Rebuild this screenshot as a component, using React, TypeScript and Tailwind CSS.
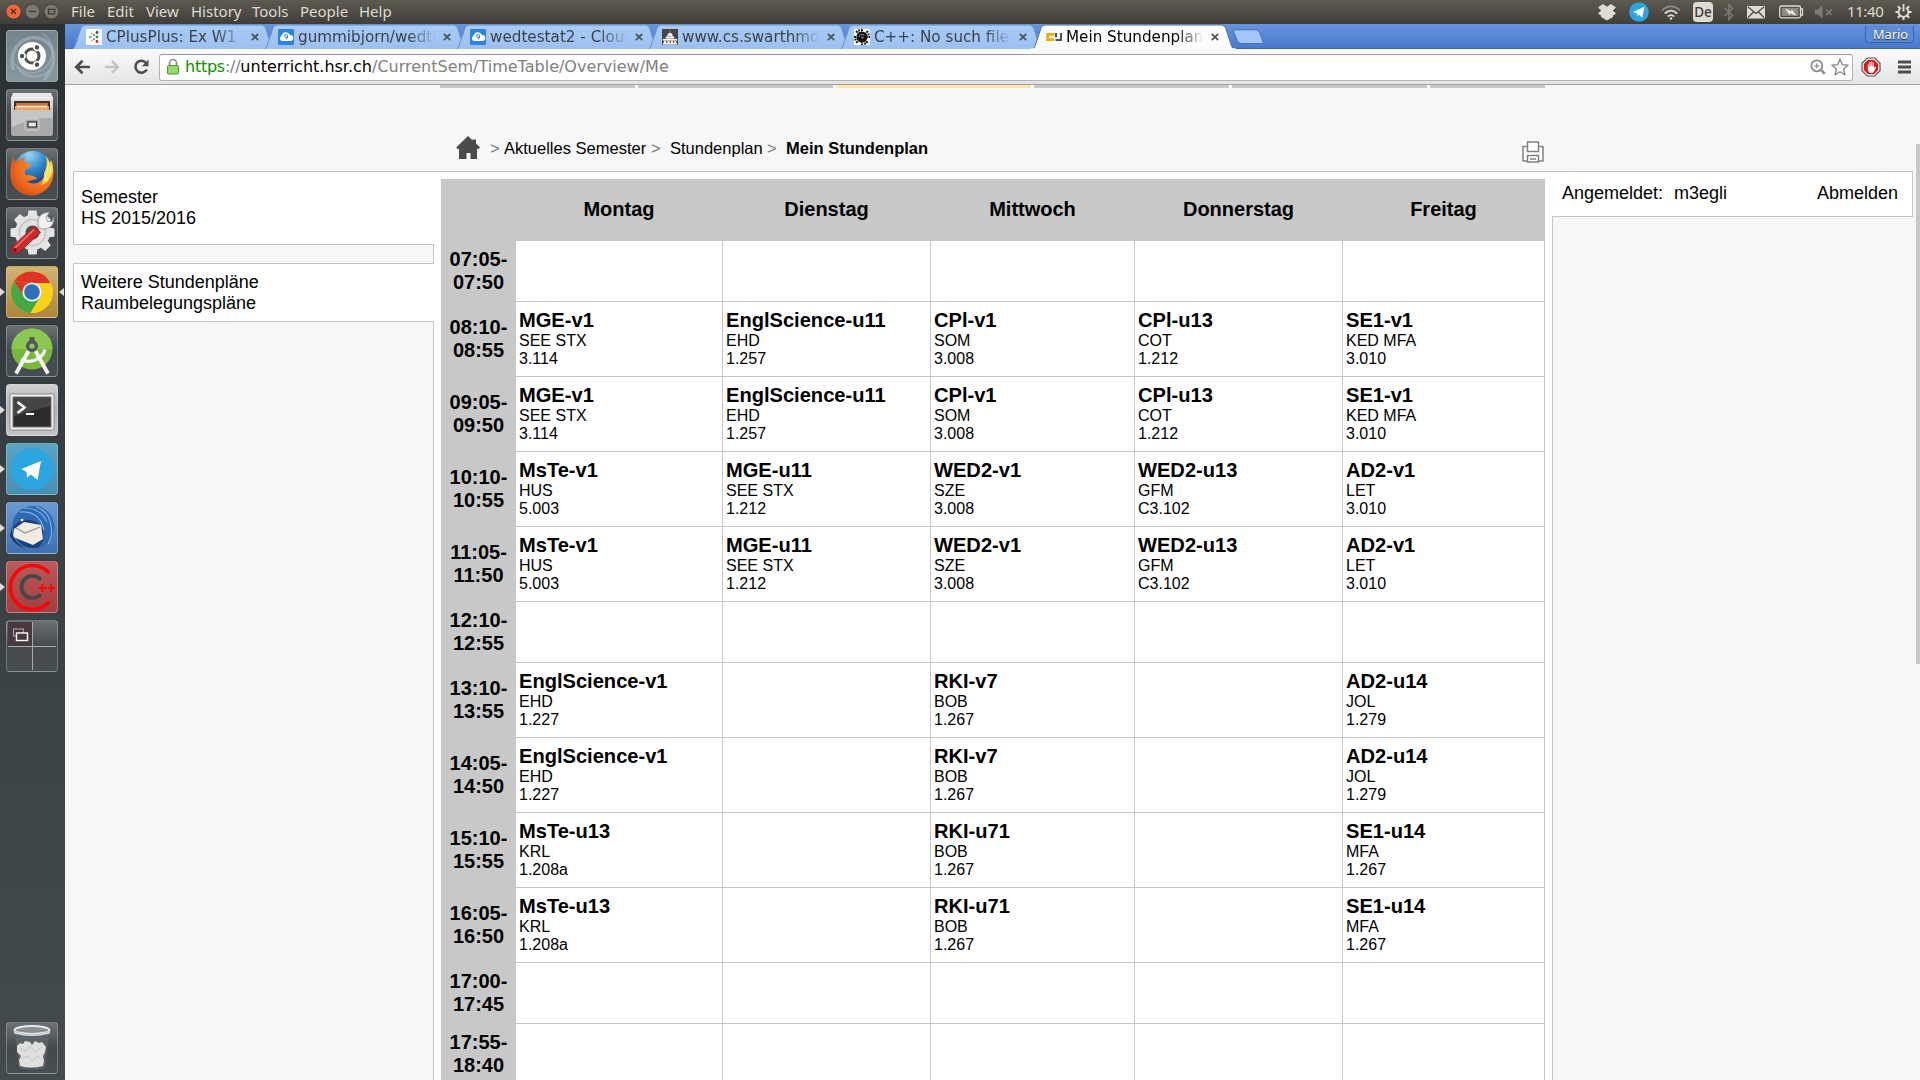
import React from "react";

type Lesson = [string, string, string] | null;
type Row = { time: [string, string]; cells: Lesson[] };

const none: Lesson[] = [null, null, null, null, null];
const rows: Row[] = [
  { time: ["07:05-", "07:50"], cells: none },
  { time: ["08:10-", "08:55"], cells: [["MGE-v1", "SEE STX", "3.114"], ["EnglScience-u11", "EHD", "1.257"], ["CPl-v1", "SOM", "3.008"], ["CPl-u13", "COT", "1.212"], ["SE1-v1", "KED MFA", "3.010"]] },
  { time: ["09:05-", "09:50"], cells: [["MGE-v1", "SEE STX", "3.114"], ["EnglScience-u11", "EHD", "1.257"], ["CPl-v1", "SOM", "3.008"], ["CPl-u13", "COT", "1.212"], ["SE1-v1", "KED MFA", "3.010"]] },
  { time: ["10:10-", "10:55"], cells: [["MsTe-v1", "HUS", "5.003"], ["MGE-u11", "SEE STX", "1.212"], ["WED2-v1", "SZE", "3.008"], ["WED2-u13", "GFM", "C3.102"], ["AD2-v1", "LET", "3.010"]] },
  { time: ["11:05-", "11:50"], cells: [["MsTe-v1", "HUS", "5.003"], ["MGE-u11", "SEE STX", "1.212"], ["WED2-v1", "SZE", "3.008"], ["WED2-u13", "GFM", "C3.102"], ["AD2-v1", "LET", "3.010"]] },
  { time: ["12:10-", "12:55"], cells: none },
  { time: ["13:10-", "13:55"], cells: [["EnglScience-v1", "EHD", "1.227"], null, ["RKI-v7", "BOB", "1.267"], null, ["AD2-u14", "JOL", "1.279"]] },
  { time: ["14:05-", "14:50"], cells: [["EnglScience-v1", "EHD", "1.227"], null, ["RKI-v7", "BOB", "1.267"], null, ["AD2-u14", "JOL", "1.279"]] },
  { time: ["15:10-", "15:55"], cells: [["MsTe-u13", "KRL", "1.208a"], null, ["RKI-u71", "BOB", "1.267"], null, ["SE1-u14", "MFA", "1.267"]] },
  { time: ["16:05-", "16:50"], cells: [["MsTe-u13", "KRL", "1.208a"], null, ["RKI-u71", "BOB", "1.267"], null, ["SE1-u14", "MFA", "1.267"]] },
  { time: ["17:00-", "17:45"], cells: none },
  { time: ["17:55-", "18:40"], cells: none },
];

const gridCols = "grid grid-cols-[75px_207px_208px_204px_208px_202px]";

/* ---------- top panel ---------- */

function TopPanel() {
  return (
    <div className="flex h-6 shrink-0 items-center bg-linear-to-b from-[#5d5a50] to-[#403e39] font-['Noto_Sans'] text-[15px] leading-[23px] text-[#dfdbd2]">
      <svg width="66" height="24" viewBox="0 0 66 24" className="shrink-0">
        <circle cx="13.5" cy="11.5" r="7.6" fill="#ee6a3d" stroke="#3b3935" strokeWidth="0.8" />
        <path d="M11 9l5 5M16 9l-5 5" stroke="#5b2a17" strokeWidth="1.4" />
        <circle cx="32.5" cy="11.5" r="7.4" fill="#7b786f" stroke="#3b3935" strokeWidth="0.8" />
        <path d="M29 11.5h7" stroke="#3c3b37" strokeWidth="1.3" />
        <circle cx="51.5" cy="11.5" r="7.4" fill="#7b786f" stroke="#3b3935" strokeWidth="0.8" />
        <rect x="48.5" y="9.3" width="6.2" height="4.6" fill="none" stroke="#3c3b37" strokeWidth="1.2" />
      </svg>
      <div className="flex pb-px">
        <span className="ml-[5px] w-9">File</span>
        <span className="w-[39px]">Edit</span>
        <span className="w-[45px]">View</span>
        <span className="w-[61px]">History</span>
        <span className="w-12">Tools</span>
        <span className="w-[59px]">People</span>
        <span>Help</span>
      </div>
      <div className="ml-auto flex h-6 items-center">
        <svg width="20" height="18" viewBox="0 0 20 18" fill="#dfdbd2">
          <path d="M6 1l4 2.7L14 1l5 3.5L15.8 7.400 19 10.500l-3 2v1.500L10 17.500l-6-3.500v-1.500l-3-2L4.200 7.400 1 4.500z" />
        </svg>
        <svg className="ml-3" width="20" height="20" viewBox="0 0 20 20">
          <circle cx="10" cy="10" r="9.800" fill="#2ca5e0" />
          <path d="M4 10L15.500 4.800 13.200 15.500 9.800 12.800 8.300 14.500V11.500z" fill="#fff" />
        </svg>
        <svg className="ml-[11px]" width="22" height="20" viewBox="0 0 22 20" fill="none" stroke="#dfdbd2">
          <path d="M1.800 8.500q9.200-8.300 18.400 0" stroke="#8e8b83" strokeWidth="1.600" />
          <path d="M4.800 11.500q6.200-5.800 12.400 0" strokeWidth="1.800" />
          <path d="M7.800 14.500q3.200-2.800 6.400 0" strokeWidth="1.800" />
          <circle cx="11" cy="16.500" r="1.300" fill="#dfdbd2" stroke="none" />
        </svg>
        <span className="ml-[11px] flex h-5 w-5 items-center justify-center rounded-sm bg-[#dfdbd2] text-[13.500px] font-medium text-[#3c3b37]">De</span>
        <svg className="ml-[10px]" width="12" height="18" viewBox="0 0 12 18" fill="none" stroke="#7f7c75" strokeWidth="1.400">
          <path d="M1.500 5l8 7.500L6 16.500V1.500L9.500 5.500l-8 7.500" />
        </svg>
        <svg className="ml-3" width="18" height="13" viewBox="0 0 18 13">
          <rect width="18" height="12.500" rx="1" fill="#dfdbd2" />
          <path d="M1 1l8 6.500L17 1M1 11.500l5.500-5.500M17 11.500L11.500 6" stroke="#45433e" strokeWidth="1.200" fill="none" />
        </svg>
        <svg className="ml-[14px]" width="25" height="14" viewBox="0 0 25 14">
          <rect x="0.700" y="1" width="20.800" height="11.800" rx="1.500" fill="none" stroke="#dfdbd2" strokeWidth="1.300" />
          <rect x="2.800" y="3" width="16.600" height="7.800" fill="#8d8a82" />
          <path d="M22 4h1.500v6H22" fill="none" stroke="#dfdbd2" strokeWidth="1.300" />
          <path d="M6 3.500l6.500 3V4l5 7-6.500-3v2.500z" fill="#f2efe8" />
        </svg>
        <svg className="ml-[11px]" width="18" height="14" viewBox="0 0 18 14">
          <path d="M0 4.500h3l4.500-4v13L3 9.500H0z" fill="#7f7c75" />
          <path d="M11 4.500l5.500 5.500M16.500 4.500L11 10" stroke="#7f7c75" strokeWidth="1.500" />
        </svg>
        <span className="ml-[14px] w-[37px] pb-px tracking-[-0.400px]">11:40</span>
        <svg className="mr-2 ml-[11px]" width="17" height="18" viewBox="0 0 18 18" fill="none" stroke="#dfdbd2">
          <path d="M6.300 4.500a5.200 5.200 0 1 0 5.400 0" strokeWidth="2" />
          <path d="M9 0.500v8" strokeWidth="2" />
          <path d="M9 14v3.500M0.500 9H4M14 9h3.500M3 3l2 2M15 3l-2 2M3 15l2.300-2.300M15 15l-2.300-2.300" strokeWidth="2.200" />
        </svg>
      </div>
    </div>
  );
}

/* ---------- launcher ---------- */

function Tile({ bg, running, focused, children }: { bg?: string; running?: boolean; focused?: boolean; children: React.ReactNode }) {
  return (
    <div className="relative flex w-full justify-center pr-px">
      {running && (
        <svg className="absolute top-[22px] left-0" width="5" height="8" viewBox="0 0 5 8"><path d="M0 0l5 4-5 4z" fill="#dcdcdc" /></svg>
      )}
      {focused && (
        <svg className="absolute top-[22px] right-px" width="5" height="8" viewBox="0 0 5 8"><path d="M5 0L0 4l5 4z" fill="#dcdcdc" /></svg>
      )}
      <div className={"h-[52px] w-[52px] overflow-hidden rounded-[4px] border border-white/25 " + (bg ?? "bg-linear-to-b from-[#6b7073] via-[#44494c] to-[#474e51]")}>
        <svg width="52" height="52" viewBox="0 0 52 52" className="-mt-px -ml-px block">{children}</svg>
      </div>
    </div>
  );
}

const gearTeeth = [0, 45, 90, 135, 180, 225, 270, 315];

function Launcher() {
  return (
    <div className="flex w-[65px] shrink-0 flex-col gap-[7px] bg-linear-to-b from-[#2b3033] via-[#353c3f] via-30% to-[#434b4e] py-1.5">
      <Tile bg="bg-linear-to-b from-[#75838a] to-[#8797a0]">
        <path d="M7 40C2 16 20 2 38 10c14 8 12 26 0 40" fill="none" stroke="#a5b1b7" strokeWidth="3.500" opacity="0.700" />
        <path d="M36 3c14 10 12 26 4 34-10 9-24 8-32-4" fill="none" stroke="#aab6bb" strokeWidth="1.500" opacity="0.600" />
        <path d="M44 40C34 50 18 48 12 38" fill="none" stroke="#b0bbc0" strokeWidth="2" opacity="0.500" />
        <circle cx="26" cy="26" r="14" fill="#fdfdfd" />
        <circle cx="26" cy="26" r="7" fill="none" stroke="#4d5154" strokeWidth="3" />
        {[60, 180, 300].map((a) => (
          <g key={a} transform={`rotate(${a} 26 26)`}>
            <circle cx="35.500" cy="26" r="3.400" fill="#fdfdfd" />
            <circle cx="36" cy="26" r="2.200" fill="#4d5154" />
          </g>
        ))}
      </Tile>
      <Tile>
        <linearGradient id="cab" x2="0" y2="1"><stop stopColor="#ececec" /><stop offset="1" stopColor="#9c9c9c" /></linearGradient>
        <path d="M7 4h38l2 5v37H5V9z" fill="url(#cab)" />
        <path d="M5 9h42" stroke="#fafafa" />
        <rect x="8" y="12" width="36" height="9" fill="#3a3430" />
        <path d="M10 14h32v7H10z" fill="#d9703a" />
        <path d="M9 17h34v4H9z" fill="#f2a45e" />
        <path d="M11 17.500h30" stroke="#fff0dc" strokeWidth="1.500" />
        <path d="M6 21h40v26H6z" fill="#a9a9a9" />
        <path d="M6 21h40v8q-20-1-40 9z" fill="#c6c6c6" />
        <rect x="19" y="30" width="14" height="11" rx="2" fill="#a3a3a3" stroke="#d5d5d5" />
        <rect x="22" y="33" width="8.500" height="5" fill="#e8e8e8" stroke="#333" strokeWidth="1.200" />
      </Tile>
      <Tile>
        <radialGradient id="fox" cx="0.700" cy="0.300" r="0.900"><stop stopColor="#f9a12c" /><stop offset="0.600" stopColor="#ee6a1f" /><stop offset="1" stopColor="#c83f14" /></radialGradient>
        <radialGradient id="globe" cx="0.400" cy="0.100" r="0.900"><stop stopColor="#9bd8f4" /><stop offset="0.450" stopColor="#2f86cc" /><stop offset="1" stopColor="#102a66" /></radialGradient>
        <circle cx="27" cy="22.500" r="19.500" fill="url(#globe)" />
        <path d="M45 14c4 8 3 17-1 23-5 8-13 10.500-19 10.500C14 47 6 40 4.500 30 3.500 22 5 14 8 8c0 3 1 5 2 6 3-2 7-4 9-5-1 2-1 4 0 6 2 1 5 0 6 1-1 3-3 5-5 5-1 2-2 3-1 5 1 2 4 0 8 2 3 1 4 2 4 3-4 0-6 3-11 2 7 5 17 2 19-7 1-4 3-5 6-12z" fill="url(#fox)" />
        <path d="M39 7c3 6 2 12-1 18 0 6-1 9-3 12 5-1 9-5 11-11 2-5 1-10-1-14l-1 3c-1-3-3-6-5-8z" fill="#fbd13a" />
        <path d="M42 14c1 6-1 13-4 19M45 18c0 6-2 11-5 15" stroke="#fff3a8" strokeWidth="1.200" fill="none" />
      </Tile>
      <Tile>
        {gearTeeth.map((a) => (
          <path key={a} d="M21.500 10L22.500 3.500h8L31.500 10z" transform={`rotate(${a} 26.500 25.500)`} fill="#e6e6e6" />
        ))}
        <circle cx="26.500" cy="25.500" r="17.500" fill="#e2e2e2" />
        <circle cx="26.500" cy="25.500" r="13" fill="none" stroke="#c4c4c4" strokeWidth="1.500" />
        <circle cx="26.500" cy="25.500" r="7" fill="#4c5053" />
        <path d="M33 21q-3-9 2.500-13.500Q39 5 43.500 5.500L40 10l1.500 4.500 4.500 0 2-4.500q0 8-4.500 10.500-3 2-6.500 1.500z" fill="#f1f1f1" stroke="#8f8f8f" strokeWidth="0.800" />
        <path d="M28 19.500L34.500 25.500 13.500 45q-4.500 3.500-7.500 0.500-2-3.500 1-6.500z" fill="#cc2a2a" stroke="#8c1515" strokeWidth="0.800" />
        <path d="M28 22.500L9 41" stroke="#ee7a74" strokeWidth="1.500" />
        <circle cx="9" cy="43" r="1.700" fill="#5d1010" />
      </Tile>
      <Tile running focused bg="bg-linear-to-b from-[#d0b273] to-[#ac8638]">
        <circle cx="26" cy="26" r="21" fill="#f7cf15" />
        <path d="M44.500 17H24L8 15.200A21 21 0 0 1 44.500 17z" fill="#de3327" />
        <path d="M8 15.200L18 31 26 26 24 16.900z" fill="#de3327" />
        <path d="M8 15.200A21 21 0 0 0 24.500 47L34 31 18 31z" fill="#45a845" />
        <path d="M24.500 47L35 30 36 17h8.500A21 21 0 0 1 24.500 47z" fill="#fbd21a" />
        <circle cx="26" cy="26" r="9.600" fill="#f3f3f3" />
        <circle cx="26" cy="26" r="7.800" fill="#2e70b8" />
      </Tile>
      <Tile>
        <circle cx="26" cy="24" r="20.500" fill="#79b83e" />
        <path d="M5.500 24a20.500 20.500 0 0 1 41 0z" fill="#8cc653" />
        <path d="M22.500 26L12.500 44 10 48.500M29.500 26L39.500 44 42 48.500" stroke="#f5f5f5" strokeWidth="3.800" fill="none" />
        <path d="M15 34.500q6 3 13 1 9-3 11-11" fill="none" stroke="#f5f5f5" strokeWidth="3.200" />
        <rect x="23.500" y="12" width="5" height="6" fill="#50585c" />
        <circle cx="26" cy="21" r="4.300" fill="#91c95d" stroke="#50585c" strokeWidth="3.400" />
      </Tile>
      <Tile running bg="bg-linear-to-b from-[#d0d0d0] via-[#b2b2b2] to-[#c4c4c4]">
        <rect x="4" y="10" width="44" height="36" fill="#efefef" stroke="#8a8a8a" />
        <rect x="7" y="13" width="38" height="30" fill="#2c2c2c" stroke="#777" />
        <path d="M8 14h36v8L8 32z" fill="#454545" />
        <path d="M11.500 18l7 5.500-7 5.500" fill="none" stroke="#fff" strokeWidth="2.600" />
        <path d="M20 30h8" stroke="#fff" strokeWidth="2" />
      </Tile>
      <Tile running bg="bg-linear-to-b from-[#5ba5c4] to-[#468fb0]">
        <circle cx="26" cy="26" r="21" fill="#2ca5e0" />
        <path d="M15.500 26L35 18 31.500 37 25 31.500 21 34.500 20.500 29z" fill="#fff" />
      </Tile>
      <Tile running bg="bg-linear-to-b from-[#6b9ad4] to-[#3f70ae]">
        <circle cx="27" cy="26" r="20" fill="#1d3f7c" />
        <path d="M6 26C6 14 14 4 28 4c12 0 20 10 20 21 0 12-8 21-18 22 6-4 9-10 7-18-3-9-10-12-19-11-5 1-9 4-12 8z" fill="#2d68b2" />
        <path d="M18 6c8 0 18 3 23 14M14 10c10-1 21 3 24 18M30 5c8 2 14 9 15 19M42 42q5-8 3-18" stroke="#7db4e8" strokeWidth="1.200" fill="none" />
        <path d="M8 27l10-7 17 3 2 14-10 6-20-8z" fill="#f1ece2" />
        <path d="M10 26l9 5 15-6" stroke="#96928b" fill="none" strokeWidth="1.200" />
        <circle cx="16" cy="18" r="1.300" fill="#fff" />
        <path d="M6 24q-1 15 13 22-10-2-15-12z" fill="#16386f" />
      </Tile>
      <Tile running bg="bg-linear-to-b from-[#b85a5c] to-[#a43d3f]">
        <path d="M42 11A22 22 0 1 0 42 42" fill="none" stroke="#f80505" strokeWidth="3.600" strokeLinecap="round" />
        <path d="M33.500 17.500A11 11 0 1 0 33.500 34.500" fill="none" stroke="#474747" strokeWidth="4" strokeLinecap="round" />
        <path d="M32.500 27h7.500M36.300 23v8M41.500 27h7.500M45.200 23v8" stroke="#f80505" strokeWidth="2" />
      </Tile>
      <Tile>
        <rect x="2" y="2" width="24" height="24" fill="#4a3740" />
        <path d="M26.500 2v48M2 26.500h48" stroke="#a8abac" strokeWidth="1" />
        <rect x="7.500" y="9" width="10" height="7" fill="#4a3740" stroke="#a79ca2" strokeWidth="1.200" />
        <rect x="10.500" y="13" width="11" height="7.500" fill="#4a3740" stroke="#fff" strokeWidth="1.400" />
      </Tile>
      <div className="mt-auto">
        <Tile>
          <path d="M9 12h34l-4 34q-13 3-26 0z" fill="#62686b" opacity="0.700" />
          <path d="M11 24l3-3 3 1 2-3 5 1 2 3 3-4 4 2 3-1 4 5-1 5-2 4 1 5-1 5q-12 3-23 0l-1-6 2-4-4-4z" fill="#dfdfdd" />
          <path d="M14 26l6 3 4-5 5 6 7-5M15 37l7-3 4 5 6-5 5 5" stroke="#c3c3c1" fill="none" />
          <ellipse cx="26" cy="8" rx="17.500" ry="4" fill="#8a8e90" stroke="#ebebe9" strokeWidth="2" />
          <path d="M8 8.500q18 7 36 0v3q-18 5-36 0z" fill="#d2d2d0" />
        </Tile>
      </div>
    </div>
  );
}

/* ---------- browser chrome ---------- */

const CloudIcon = () => (
  <svg width="16" height="16" viewBox="0 0 16 16" className="shrink-0">
    <rect width="16" height="16" rx="1" fill="#2c83dc" />
    <path d="M4 12a3 3 0 0 1-.5-5.500A4.500 4.500 0 0 1 12 6a3 3 0 0 1 .5 6z" fill="#fff" />
    <circle cx="8.200" cy="7" r="1.500" fill="none" stroke="#2c83dc" />
    <path d="M9.700 7q0 3-2 3.200" fill="none" stroke="#2c83dc" />
  </svg>
);

const tabs: { title: string; icon: React.ReactNode }[] = [
  {
    title: "CPlusPlus: Ex W1 -",
    icon: (
      <svg width="16" height="16" viewBox="0 0 16 16" className="shrink-0"><rect width="16" height="16" fill="#fafafa" /><path d="M4 8h2M5 11l2 1M5 5l2-1" stroke="#999" /><circle cx="4" cy="8" r="1" fill="#777" /><circle cx="8" cy="6" r="1" fill="#777" /><circle cx="8" cy="10" r="1" fill="#777" /><circle cx="11" cy="3.500" r="1.400" fill="#224a9c" /><circle cx="11" cy="8" r="1.400" fill="#3b9a36" /><circle cx="11" cy="12.500" r="1.400" fill="#cc2b2b" /></svg>
    ),
  },
  { title: "gummibjorn/wedte", icon: <CloudIcon /> },
  { title: "wedtestat2 - Cloud", icon: <CloudIcon /> },
  {
    title: "www.cs.swarthmo",
    icon: (
      <svg width="16" height="16" viewBox="0 0 16 16" className="shrink-0"><rect width="16" height="16" fill="#454545" /><path d="M8 1v3M5.500 7a2.500 3 0 0 1 5 0zM4 7.500h8v2H4zM1 10h14v1.500H1zM1 14h14v1.500H1zM2 12h2v2H2zM5.500 12h2v2h-2zM9 12h2v2H9zM12.500 12h1.500v2h-1.500z" fill="#f0f0f0" stroke="#f0f0f0" strokeWidth="0.300" /></svg>
    ),
  },
  {
    title: "C++: No such file",
    icon: (
      <svg width="16" height="16" viewBox="0 0 16 16" className="shrink-0"><rect width="16" height="16" fill="#fff" /><circle cx="8" cy="8" r="5.500" fill="#111" /><path d="M8 0v16M0 8h16M2 2l12 12M14 2L2 14M4.500 .5l7 15M.5 11l15-6" stroke="#111" strokeWidth="1.800" strokeDasharray="2.200 0.700" /><path d="M5 8a3 3 0 0 1 5-2" fill="none" stroke="#999" /><circle cx="8.500" cy="8.500" r="1.200" fill="#777" /></svg>
    ),
  },
  {
    title: "Mein Stundenplan",
    icon: (
      <svg width="16" height="16" viewBox="0 0 16 16" className="shrink-0"><path d="M8 5.300H1.600v5.400H8" fill="none" stroke="#f5a800" strokeWidth="2.700" /><path d="M10 4V8.300M9.500 11h5.500V4" fill="none" stroke="#4b5059" strokeWidth="2.200" /></svg>
    ),
  },
];

function Tab({ title, icon, active }: { title: string; icon: React.ReactNode; active: boolean }) {
  return (
    <div className={"relative flex h-[25px] w-48 shrink-0 items-center pl-[13px] " + (active ? "z-10" : "")}>
      <svg className="absolute top-0 -left-0.5 -z-10" width="205" height="25" viewBox="0 0 205 25">
        <linearGradient id="tabfill" x2="0" y2="1"><stop stopColor="#a9cbf6" /><stop offset="1" stopColor="#9bc0f1" /></linearGradient>
        <path
          d="M1 25.500Q3 24.500 4 22L10 4Q11.200 1 14 1H190.500Q193.500 1 194.700 4L200.500 22Q201.500 24.500 204 25.500z"
          fill={active ? "#fdfdfd" : "url(#tabfill)"}
          stroke={active ? "#4a6fab" : "#6a8fc8"}
          strokeWidth="1"
        />
        {active && <path d="M0 25h205" stroke="#fdfdfd" strokeWidth="1.500" />}
      </svg>
      {icon}
      <span className={"ml-1 h-[22px] w-[138px] shrink-0 overflow-hidden mask-r-from-80% font-['DejaVu_Sans'] text-[15.200px] leading-[23px] whitespace-nowrap " + (active ? "text-black" : "text-[#3c4148]")}>{title}</span>
      <svg className="ml-[7px] shrink-0" width="8" height="8" viewBox="0 0 8 8"><path d="M.8.8l6.400 6.400M7.200.8L.8 7.200" stroke="#4c5157" strokeWidth="1.700" /></svg>
    </div>
  );
}

function BrowserChrome() {
  return (
    <>
      <div className="relative isolate flex h-[25px] shrink-0 border-b border-[#3f66ae] bg-linear-to-b from-[#6595e0] to-[#4a78cc] pl-2">
        {tabs.map((t, i) => (
          <Tab key={i} title={t.title} icon={t.icon} active={i === 5} />
        ))}
        <svg className="mt-[5px] ml-[7px]" width="33" height="16" viewBox="0 0 33 16">
          <path d="M3 .8H24q2.500 0 3.500 2.500l3.500 9.500q.5 1.800-1.500 1.800H9q-2.500 0-3.500-2.500L1.500 2.800Q1 .8 3 .8z" fill="#a3c6f5" stroke="#4670b8" />
        </svg>
        <div className="mt-0.5 mr-1.5 ml-auto h-[17px] w-[49px] rounded-b-sm border border-t-0 border-[#3a62ab] bg-[#5c8ad6] pl-0.5 text-center font-['Noto_Sans'] text-[12.800px] leading-[17px] text-white [text-shadow:0_1px_1px_#222]">Mario</div>
      </div>
      <div className="flex h-9 shrink-0 items-center border-b border-[#a0a0a0] bg-linear-to-b from-[#fbfbfb] to-[#e4e4e4] pl-[9px]">
        <svg width="17" height="16" viewBox="0 0 17 16" fill="none" stroke="#4d4d4d" strokeWidth="2.700"><path d="M16 8H3M8.500 1.800L2.300 8l6.200 6.200" /></svg>
        <svg className="ml-[13px]" width="16" height="16" viewBox="0 0 17 16" fill="none" stroke="#c3c3c3" strokeWidth="2.600"><path d="M1 8h13M8.500 1.800L14.700 8l-6.200 6.200" /></svg>
        <svg className="ml-[13px]" width="17" height="16" viewBox="0 0 17 16"><path d="M13 3.800A6 6 0 1 0 13.800 10.500" fill="none" stroke="#4d4d4d" strokeWidth="2.600" /><path d="M15.500.5V7.200H8.800z" fill="#4d4d4d" /></svg>
        <div className="mt-px ml-[9px] flex h-[27px] w-[1694px] items-center rounded-[3px] border border-[#b4b4b4] border-t-[#9d9d9d] bg-white pl-[7px]">
          <svg width="12" height="16" viewBox="0 0 12 16"><path d="M2.500 8V4a3.500 3.500 0 0 1 7 0v4" fill="none" stroke="#8a8a8a" strokeWidth="1.600" /><rect x="0.500" y="6.500" width="11" height="8.500" rx="1" fill="#8fd560" stroke="#54983a" /><path d="M1.500 9h9M1.500 11h9M1.500 13h9" stroke="#a9e583" strokeWidth="0.800" /></svg>
          <span className="ml-[6px] font-['DejaVu_Sans'] text-[16px] leading-6 whitespace-nowrap text-[#808080]">
            <span className="tracking-[-0.250px]"><span className="text-[#0b9100]">https</span>://</span><span className="text-black">unterricht.hsr.ch</span><span>/CurrentSem/TimeTable/Overview/Me</span>
          </span>
          <svg className="ml-auto" width="16" height="16" viewBox="0 0 16 16" fill="none" stroke="#8b8b8b"><circle cx="6.800" cy="6.800" r="5.500" strokeWidth="1.800" /><path d="M11 11l3.800 3.800" strokeWidth="2.500" /><path d="M4.300 6.800h5M6.800 4.300v5" strokeWidth="1.200" /></svg>
          <svg className="mr-[3px] ml-[5px]" width="18" height="18" viewBox="0 0 18 18" fill="none" stroke="#868686" strokeWidth="1.300" strokeLinejoin="round"><path d="M9 1l2.200 5.700 6 .4-4.600 3.900 1.400 6L9 13.800 4 17l1.400-6L.8 7.100l6-.4z" /></svg>
        </div>
        <svg className="ml-2" width="20" height="20" viewBox="0 0 20 20"><path d="M6.300 1h7.400L19 6.300v7.400L13.700 19H6.300L1 13.700V6.300z" fill="#fff" stroke="#555" strokeWidth="1.200" /><path d="M7 2.800h6L17.200 7v6L13 17.200H7L2.800 13V7z" fill="#e01515" /><path d="M6.800 13V7.500h1V10h.6V5h1.200v4.500h.5V4.500h1.200v5h.5V5.500h1.200V11l1.500-1.500.9.500L13 14.500 11.500 16h-3z" fill="#fff" /></svg>
        <svg className="ml-[17px]" width="13" height="14" viewBox="0 0 13 14" stroke="#4d4d4d" strokeWidth="2.800"><path d="M0 2h13M0 7h13M0 12h13" /></svg>
      </div>
    </>
  );
}

/* ---------- page ---------- */

function Timetable() {
  return (
    <div className="mt-[7px] ml-[7px] w-[1104px] text-black">
      <div className={gridCols + " h-[62px] items-center bg-[#c8c8c8] pb-0.5 text-center text-[20px] leading-[23px] font-bold"}>
        <span />
        <span className="pr-px">Montag</span>
        <span className="pr-px">Dienstag</span>
        <span className="pr-px">Mittwoch</span>
        <span className="pr-px">Donnerstag</span>
        <span className="pr-px">Freitag</span>
      </div>
      {rows.map((r) => (
        <div key={r.time[0]} className={gridCols + (r.cells === none ? " h-[61px]" : " h-[75px]")}>
          <div className="flex flex-col justify-center bg-[#c8c8c8] pb-px text-center text-[20px] leading-[23px] font-bold">
            <span>{r.time[0]}</span>
            <span>{r.time[1]}</span>
          </div>
          {r.cells.map((c, i) => (
            <div key={i} className="border-r border-b border-[#c6c6c6] bg-white pt-[7px] pl-[3px]">
              {c && (
                <>
                  <div className="text-[20.100px] leading-[23px] font-bold">{c[0]}</div>
                  <div className="text-[16px] leading-[18px]">{c[1]}</div>
                  <div className="text-[16px] leading-[18px]">{c[2]}</div>
                </>
              )}
            </div>
          ))}
        </div>
      ))}
    </div>
  );
}

function Page() {
  return (
    <div className="relative flex min-h-0 flex-1 flex-col overflow-hidden bg-[#f7f7f7] font-['Liberation_Sans',sans-serif] text-black">
      <div className="ml-[375px] flex h-[3px] w-[1105px] shrink-0 gap-[3px] bg-white">
        <div className="w-[195px] bg-[#c8c8c8]" />
        <div className="w-[195px] bg-[#c8c8c8]" />
        <div className="w-[195px] bg-[#ffe5b0]" />
        <div className="w-[195px] bg-[#c8c8c8]" />
        <div className="w-[195px] bg-[#c8c8c8]" />
        <div className="flex-1 bg-[#c8c8c8]" />
      </div>
      <div className="flex h-[83px] shrink-0 items-start pt-12 pl-[391px] text-[16.500px] leading-6 whitespace-nowrap">
        <svg width="24" height="24" viewBox="0 0 24 24"><path d="M12 0l4.500 4.300V3.500h3.500v4L24 11.500l-1 1.200h-2V23h-6.500v-6h-4v6H3V12.700H1L.2 11.500z" fill="#4a4a4a" /></svg>
        <span className="w-[24px] pl-[10px] text-[#777]">&gt;</span>
        <span className="w-[147px]">Aktuelles Semester</span>
        <span className="w-[19px] text-[#777]">&gt;</span>
        <span className="w-[97px]">Stundenplan</span>
        <span className="w-[19px] text-[#777]">&gt;</span>
        <span className="font-bold">Mein Stundenplan</span>
        <svg className="mt-[5px] mr-[376px] ml-auto bg-white" width="22" height="22" viewBox="0 0 22 22" fill="none" stroke="#808080" strokeWidth="1.500">
          <path d="M5.500 10.500V1h11v9.500zM5.500 5.500H1v14.500h4.500M16.500 5.500H21v14.500h-4.500M5.500 14.500h11V21h-11zM8 18h6" />
        </svg>
      </div>
      <div className="flex min-h-0 flex-1 pl-2">
        <aside className="flex w-[361px] shrink-0 flex-col text-[18px] leading-[21px]">
          <div className="h-[74px] border border-r-0 border-[#c6c6c6] bg-white pt-[15px] pl-[7px]">
            <div>Semester</div>
            <div>HS 2015/2016</div>
          </div>
          <div className="h-[18px] border-r border-[#c6c6c6]" />
          <div className="h-[59px] border border-r-0 border-[#c6c6c6] bg-white pt-[8px] pl-[7px]">
            <div>Weitere Stundenpläne</div>
            <div>Raumbelegungspläne</div>
          </div>
          <div className="flex-1 border-r border-[#c6c6c6]" />
        </aside>
        <main className="w-[1118px] shrink-0 border-t border-[#c6c6c6] bg-white">
          <Timetable />
        </main>
        <aside className="flex w-[361px] shrink-0 flex-col text-[18px] leading-[21px]">
          <div className="flex h-[46px] border border-l-0 border-[#c6c6c6] bg-white pt-[11px] pr-[14px] pl-[10px]">
            <span>Angemeldet:</span>
            <span className="ml-[11px]">m3egli</span>
            <span className="ml-auto">Abmelden</span>
          </div>
          <div className="flex-1 border-l border-[#c6c6c6]" />
        </aside>
      </div>
      <div className="absolute top-[59px] right-0 h-[520px] w-1 bg-[#c8c8c8]" />
    </div>
  );
}

export default function App() {
  return (
    <div className="flex h-[1080px] w-[1920px] flex-col overflow-hidden">
      <TopPanel />
      <div className="flex min-h-0 flex-1">
        <Launcher />
        <div className="flex min-w-0 flex-1 flex-col">
          <BrowserChrome />
          <Page />
        </div>
      </div>
    </div>
  );
}
